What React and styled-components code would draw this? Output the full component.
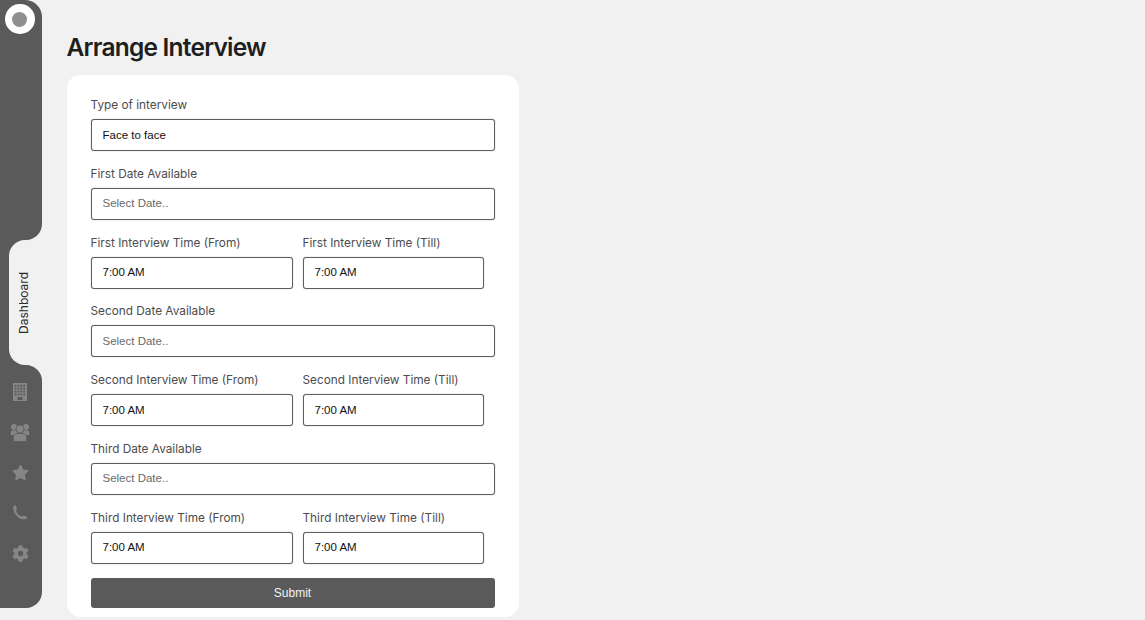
import React from "react";
import styled, { createGlobalStyle } from "styled-components";
import { FaStar, FaCog } from "react-icons/fa";

const dark = "#5a5a5a";
const page = "#f1f1f1";
const iconGrey = "#868686";

const GlobalStyle = createGlobalStyle`
  html, body {
    margin: 0;
    height: 100%;
    overflow: hidden;
    background: ${page};
    font-family: "Inter", "Liberation Sans", sans-serif;
  }
`;

const Layout = styled.div`
  display: flex;
  height: 620px;
`;

const Sidebar = styled.aside`
  display: flex;
  flex-direction: column;
  flex: none;
  width: 41.5px;
  height: 607.5px;
`;

const SideTop = styled.div`
  height: 240px;
  padding: 4px 0 0 5px;
  box-sizing: border-box;
  background: ${dark};
  border-radius: 0 17px 16px 0;
`;

const Logo = styled.div`
  display: flex;
  align-items: center;
  justify-content: center;
  width: 29.5px;
  height: 30px;
  border-radius: 50%;
  background: #fff;

  &::after {
    content: "";
    width: 15px;
    height: 15px;
    border-radius: 50%;
    background: #8f8f8f;
  }
`;

const TabBack = styled.div`
  height: 125px;
  padding-left: 9px;
  background: linear-gradient(to right, ${dark} 25px, ${page} 25px);
`;

const Tab = styled.div`
  display: flex;
  align-items: center;
  justify-content: center;
  height: 100%;
  padding-right: 3px;
  box-sizing: border-box;
  background: ${page};
  border-radius: 16px 0 0 16px;
`;

const TabLabel = styled.span`
  writing-mode: vertical-rl;
  transform: rotate(180deg);
  font-size: 12px;
  color: #2b2b2b;
`;

const SideBottom = styled.nav`
  flex: 1;
  display: flex;
  flex-direction: column;
  align-items: center;
  gap: 20.5px;
  padding: 16.5px 1.5px 0 0;
  box-sizing: border-box;
  background: ${dark};
  border-radius: 0 16px 16px 0;
  color: ${iconGrey};
`;

const NavIcon = styled.span`
  display: flex;
  align-items: center;
  justify-content: center;
  width: 20px;
  height: 20px;
`;

const Main = styled.main`
  padding: 32px 0 0 25px;
`;

const Title = styled.h1`
  margin: 0 0 13px;
  font-size: 24.5px;
  line-height: 30px;
  font-weight: 600;
  letter-spacing: -0.78px;
  color: #1e1e1e;
`;

const Card = styled.form`
  display: flex;
  flex-direction: column;
  gap: 12.75px;
  width: 452px;
  height: 542px;
  padding: 20px 24px 0;
  box-sizing: border-box;
  background: #fff;
  border-radius: 14px;
`;

const Row = styled.div`
  display: grid;
  grid-template-columns: 202px 181px;
  column-gap: 10px;
`;

const Field = styled.label`
  display: block;
`;

const LabelText = styled.span`
  display: block;
  height: 18px;
  margin-bottom: 6px;
  font-size: 11.8px;
  line-height: 20px;
  color: #4c4c4c;
`;

const Input = styled.input`
  display: block;
  width: 100%;
  height: 32px;
  padding: 0 11px 1px;
  box-sizing: border-box;
  border: 1px solid #5f5f5f;
  border-radius: 3px;
  box-shadow: 0 0 1px #777;
  background: #fff;
  outline: 0;
  font-family: "Liberation Sans", Arial, sans-serif;
  font-size: 11.5px;
  color: #111;

  &::placeholder {
    color: #6a6a6a;
    opacity: 1;
  }
`;

const Submit = styled.button`
  height: 30px;
  margin-top: 1.25px;
  border: 0;
  border-radius: 3px;
  background: ${dark};
  font-family: "Liberation Sans", Arial, sans-serif;
  font-size: 12px;
  color: #f2f2f2;
`;

const BuildingIcon = () => (
  <svg width="20" height="20" viewBox="0 0 20 20">
    <rect x="3" y="1" width="14" height="18" fill="currentColor" />
    {[0, 1, 2, 3].flatMap((row) =>
      [0, 1, 2, 3].map((col) => (
        <rect key={`${row}-${col}`} x={4.6 + col * 2.9} y={2.8 + row * 2.9} width="1.8" height="1.8" fill={dark} />
      ))
    )}
    <rect x="7.5" y="15" width="5" height="3" fill={dark} />
  </svg>
);

const UsersIcon = () => (
  <svg width="20" height="20" viewBox="0 0 20 20" fill="currentColor">
    <circle cx="4" cy="5" r="3" />
    <circle cx="16" cy="5" r="3" />
    <path d="M0.8 13 V10.5 C0.8 9 2 8.5 4 8.5 H16 C18 8.5 19.2 9 19.2 10.5 V13 Z" />
    <circle cx="10" cy="7" r="4" stroke={dark} strokeWidth="0.8" />
    <path d="M3.5 19.5 V14.5 C3.5 12.5 5.5 11.5 7 11.5 H13 C14.5 11.5 16.5 12.5 16.5 14.5 V19.5 Z" stroke={dark} strokeWidth="0.8" />
  </svg>
);

const PhoneIcon = () => (
  <svg width="20" height="20" viewBox="0 0 20 20" fill="currentColor">
    <path d="M3.2 3.6 L5.4 2 L7.2 6 L5.9 7.4 C6.8 10.4 9.3 12.8 12.3 13.6 L14 12.4 L17.6 14.4 L16.2 15.9 C14 16.8 11 16.4 8 14.2 C4.8 11.6 2.8 7.4 3.2 3.6 Z" />
  </svg>
);

const TextField = ({ label, value, placeholder }) => (
  <Field>
    <LabelText>{label}</LabelText>
    <Input readOnly value={value} placeholder={placeholder} />
  </Field>
);

const rounds = ["First", "Second", "Third"];

export default function App() {
  return (
    <>
      <GlobalStyle />
      <Layout>
        <Sidebar>
          <SideTop>
            <Logo />
          </SideTop>
          <TabBack>
            <Tab>
              <TabLabel>Dashboard</TabLabel>
            </Tab>
          </TabBack>
          <SideBottom>
            <NavIcon><BuildingIcon /></NavIcon>
            <NavIcon><UsersIcon /></NavIcon>
            <NavIcon><FaStar size={17} /></NavIcon>
            <NavIcon><PhoneIcon /></NavIcon>
            <NavIcon><FaCog size={17} /></NavIcon>
          </SideBottom>
        </Sidebar>
        <Main>
          <Title>Arrange Interview</Title>
          <Card onSubmit={(e) => e.preventDefault()}>
            <TextField label="Type of interview" value="Face to face" />
            {rounds.map((round) => (
              <React.Fragment key={round}>
                <TextField label={`${round} Date Available`} value="" placeholder="Select Date.." />
                <Row>
                  <TextField label={`${round} Interview Time (From)`} value="7:00 AM" />
                  <TextField label={`${round} Interview Time (Till)`} value="7:00 AM" />
                </Row>
              </React.Fragment>
            ))}
            <Submit type="submit">Submit</Submit>
          </Card>
        </Main>
      </Layout>
    </>
  );
}
